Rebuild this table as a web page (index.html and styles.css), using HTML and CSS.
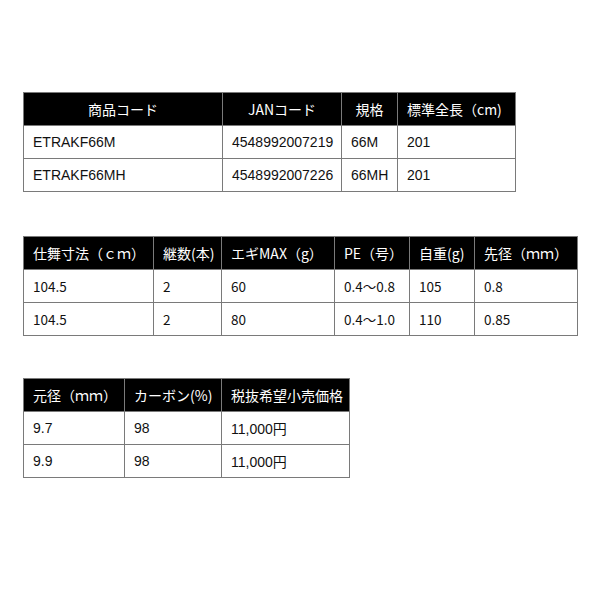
FILE: index.html
```html
<!DOCTYPE html>
<html lang="ja">
<head>
<meta charset="utf-8">
<link rel="stylesheet" href="styles.css">
</head>
<body>
<div class="page">
  <table class="spec spec-a">
    <colgroup><col class="a1"><col class="a2"><col class="a3"><col class="a4"></colgroup>
    <thead>
      <tr><th class="c">商品コード</th><th class="c">JANコード</th><th class="c">規格</th><th>標準全長（cm)</th></tr>
    </thead>
    <tbody>
      <tr><td>ETRAKF66M</td><td>4548992007219</td><td>66M</td><td>201</td></tr>
      <tr><td>ETRAKF66MH</td><td>4548992007226</td><td>66MH</td><td>201</td></tr>
    </tbody>
  </table>

  <table class="spec spec-b">
    <colgroup><col class="b1"><col class="b2"><col class="b3"><col class="b4"><col class="b5"><col class="b6"></colgroup>
    <thead>
      <tr><th>仕舞寸法（ｃｍ）</th><th>継数(本)</th><th>エギMAX（g）</th><th>PE（号）</th><th>自重(g)</th><th>先径（ｍｍ）</th></tr>
    </thead>
    <tbody>
      <tr><td>104.5</td><td>2</td><td>60</td><td>0.4～0.8</td><td>105</td><td>0.8</td></tr>
      <tr><td>104.5</td><td>2</td><td>80</td><td>0.4～1.0</td><td>110</td><td>0.85</td></tr>
    </tbody>
  </table>

  <table class="spec spec-c">
    <colgroup><col class="c1"><col class="c2"><col class="c3"></colgroup>
    <thead>
      <tr><th>元径（ｍｍ）</th><th>カーボン(%)</th><th>税抜希望小売価格</th></tr>
    </thead>
    <tbody>
      <tr><td>9.7</td><td>98</td><td>11,000円</td></tr>
      <tr><td>9.9</td><td>98</td><td>11,000円</td></tr>
    </tbody>
  </table>
</div>
</body>
</html>
```

FILE: styles.css
```css
html, body {
  margin: 0;
  padding: 0;
  background: #ffffff;
}

.page {
  padding: 92px 0 0 23px;
  font-family: "Liberation Sans", "Noto Sans CJK JP", sans-serif;
  font-size: 14px;
  color: #111111;
}

.spec {
  border-collapse: collapse;
  table-layout: fixed;
  margin-bottom: 44px;
}

.spec-a { width: 492px; }
.spec-b { width: 554px; }
.spec-c { width: 326px; }

.a1 { width: 199px; }
.a2 { width: 119px; }
.a3 { width: 56px; }
.a4 { width: 118px; }

.b1 { width: 130px; }
.b2 { width: 68px; }
.b3 { width: 113px; }
.b4 { width: 75px; }
.b5 { width: 65px; }
.b6 { width: 103px; }

.c1 { width: 101px; }
.c2 { width: 97px; }
.c3 { width: 128px; }

.spec-b {
  margin-bottom: 42px;
  font-family: "Noto Sans CJK JP", sans-serif;
  font-size: 13.5px;
}

.spec th,
.spec td {
  border: 1px solid #7a7a7a;
  height: 33px;
  padding: 0 9px;
  text-align: left;
  white-space: nowrap;
  overflow: hidden;
  box-sizing: border-box;
}

.spec th {
  background: #000000;
  color: #ffffff;
  font-weight: normal;
  font-family: "Noto Sans CJK JP", sans-serif;
  font-size: 14px;
}

.spec th.c {
  text-align: center;
}
```
